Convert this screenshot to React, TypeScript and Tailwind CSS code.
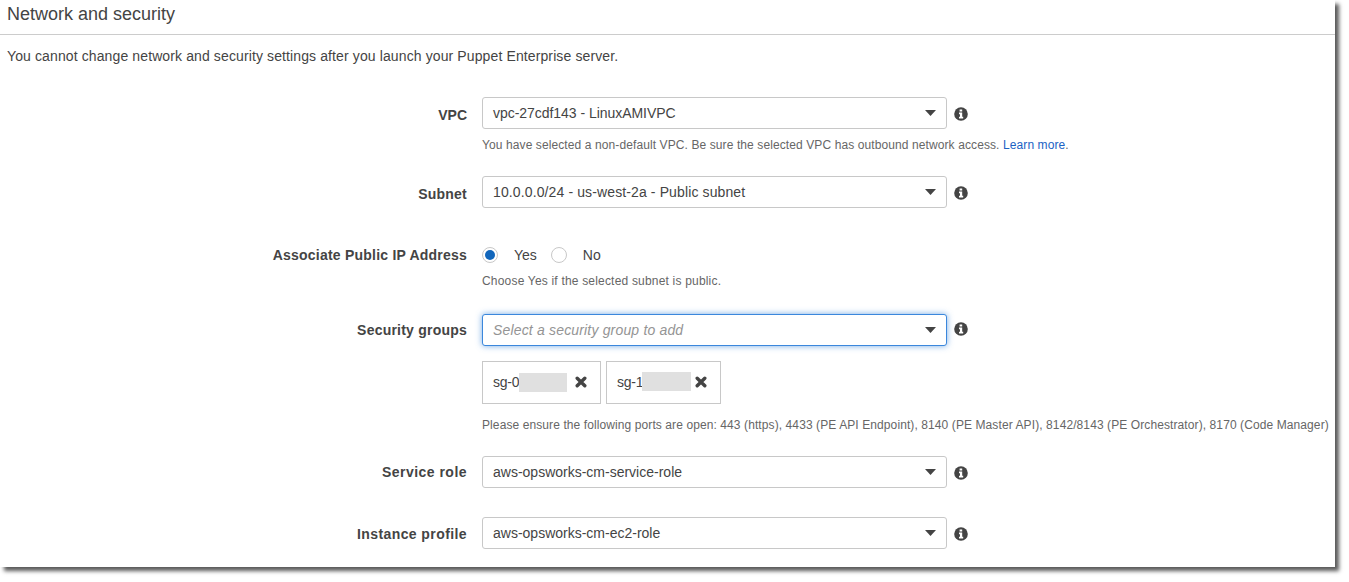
import React from 'react';

const InfoIcon: React.FC<{ className?: string }> = ({ className }) => (
  <svg viewBox="0 0 14 14" className={`w-[14px] h-[14px] ml-[7px] shrink-0 ${className ?? ''}`}>
    <circle cx="7" cy="7" r="6.8" fill="#444" />
    <path d="M5.6 2.4h2.6v2H5.6zM5 5.6h3.2v4.2h1v1.6H5V9.8h1V7.2H5z" fill="#fff" />
  </svg>
);

const Caret = () => (
  <svg viewBox="0 0 11 6" className="w-[11px] h-[6px] absolute right-[10px] top-[12px]">
    <path d="M0 0h11L5.5 6z" fill="#444" />
  </svg>
);

const Close = () => (
  <svg viewBox="0 0 12 12" className="w-[12px] h-[12px]">
    <path d="M2.2 2.2l7.6 7.6M9.8 2.2l-7.6 7.6" stroke="#444" strokeWidth="3.4" strokeLinecap="round" />
  </svg>
);

const Select: React.FC<{ value: string; placeholder?: boolean; iconClass?: string; textClass?: string }> = ({ value, placeholder, iconClass, textClass }) => (
  <div className="flex items-center">
    <div className={`relative w-[465px] h-[32px] bg-white rounded-[3px] border pl-[10px] flex items-center text-[14px] ${textClass ?? ''} ${placeholder ? 'border-[#3b87dc] shadow-[0_0_6px_rgba(60,135,220,0.7)] italic text-[#949494]' : 'border-[#c8c8c8] text-[#444]'}`}>
      {value}
      <Caret />
    </div>
    <InfoIcon className={iconClass} />
  </div>
);

const Row: React.FC<{ label: string; className?: string; labelClass?: string; children: React.ReactNode }> = ({ label, className, labelClass, children }) => (
  <div className={`flex ${className ?? ''}`}>
    <div className={`w-[467px] h-[32px] flex items-center justify-end text-[14px] font-bold text-[#444] shrink-0 ${labelClass ?? ''}`}>{label}</div>
    <div className="ml-[15px]">{children}</div>
  </div>
);

const Help: React.FC<{ children: React.ReactNode; className?: string }> = ({ children, className }) => (
  <p className={`text-[12px] leading-[16px] text-[#666] whitespace-nowrap ${className ?? ''}`}>{children}</p>
);

const Token: React.FC<{ prefix: string; maskClass: string; width: string; closeClass: string }> = ({ prefix, maskClass, width, closeClass }) => (
  <div className={`h-[43px] border border-[#c8c8c8] flex items-center pl-[10px] text-[14px] tracking-[-0.25px] text-[#444] ${width}`}>
    {prefix}
    <span className={`h-[19px] bg-[#e0e0e0] ${maskClass}`}></span>
    <span className={closeClass}><Close /></span>
  </div>
);

export default function App() {
  return (
    <div className="h-[582px] w-[1349px] bg-white overflow-hidden font-['Liberation_Sans',Arial,sans-serif]">
      <div className="w-[1335px] h-[567px] bg-white shadow-[4px_4px_4px_rgba(0,0,0,0.65)]">
        <div className="h-[35px] border-b border-[#ccc] pl-[7px] pt-[3px] text-[18px] leading-[22px] text-[#444]">Network and security</div>
        <p className="pl-[7px] mt-[12px] text-[14px] leading-[18px] text-[#444] tracking-[0.115px]">You cannot change network and security settings after you launch your Puppet Enterprise server.</p>
        <Row label="VPC" className="mt-[32px]" labelClass="pt-[4px]">
          <Select value="vpc-27cdf143 - LinuxAMIVPC" iconClass="mt-[1px]" textClass="tracking-[-0.04px]" />
          <Help className="mt-[8px] tracking-[0.1px]">You have selected a non-default VPC. Be sure the selected VPC has outbound network access. <a className="text-[#1a62c4]">Learn more</a>.</Help>
        </Row>
        <Row label="Subnet" className="mt-[23px] tracking-[0.22px]" labelClass="pt-[4px]">
          <Select value="10.0.0.0/24 - us-west-2a - Public subnet" iconClass="mt-[1px]" textClass="tracking-[0.12px]" />
        </Row>
        <Row label="Associate Public IP Address" className="mt-[31px] tracking-[0.22px]">
          <div className="h-[32px] flex items-center text-[14px] text-[#444] tracking-normal">
            <span className="w-[16px] h-[16px] rounded-full border border-[#c8c8c8] flex items-center justify-center">
              <span className="w-[10px] h-[10px] rounded-full bg-[#1166bb]"></span>
            </span>
            <span className="ml-[16px]">Yes</span>
            <span className="ml-[14px] w-[16px] h-[16px] rounded-full border border-[#c8c8c8]"></span>
            <span className="ml-[16px]">No</span>
          </div>
          <Help className="mt-[2px] tracking-[0.19px]">Choose Yes if the selected subnet is public.</Help>
        </Row>
        <Row label="Security groups" className="mt-[25px] tracking-[0.22px]">
          <Select value="Select a security group to add" placeholder iconClass="-mt-[2px]" textClass="tracking-[0.17px]" />
          <div className="flex gap-[5px] mt-[15px]">
            <Token prefix="sg-0" maskClass="w-[48px] -mt-[1px]" width="w-[119px]" closeClass="ml-[8px] -mt-[1px]" />
            <Token prefix="sg-1" maskClass="w-[49px] -ml-[1px] -mt-[3px]" width="w-[115px]" closeClass="ml-[4px] -mt-[1px]" />
          </div>
          <Help className="mt-[13px] tracking-[0.095px]">Please ensure the following ports are open: 443 (https), 4433 (PE API Endpoint), 8140 (PE Master API), 8142/8143 (PE Orchestrator), 8170 (Code Manager)</Help>
        </Row>
        <Row label="Service role" className="mt-[23px] tracking-[0.47px]">
          <Select value="aws-opsworks-cm-service-role" iconClass="mt-[1px]" textClass="tracking-normal" />
        </Row>
        <Row label="Instance profile" className="mt-[29px] tracking-[0.41px]" labelClass="pt-[2px]">
          <Select value="aws-opsworks-cm-ec2-role" iconClass="mt-[1px]" textClass="tracking-normal" />
        </Row>
      </div>
    </div>
  );
}
